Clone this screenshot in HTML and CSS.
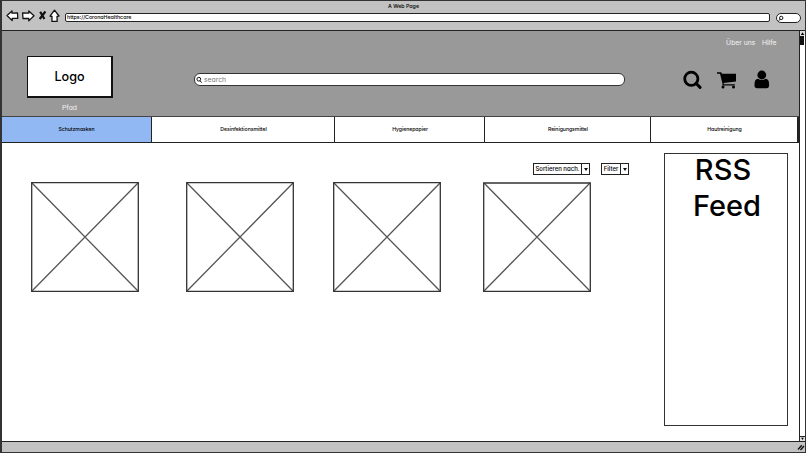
FILE: index.html
```html
<!DOCTYPE html>
<html lang="de">
<head>
<meta charset="utf-8">
<title>A Web Page</title>
<link rel="stylesheet" href="styles.css">
</head>
<body>
<div class="window">
  <div class="chrome">
    <div class="title"><span>A Web Page</span></div>
    <div class="toolbar">
      <svg class="controls" width="56" height="16" viewBox="0 0 56 16" fill="#fff" stroke="#111" stroke-width="1.3" stroke-linejoin="round">
        <path d="M1 7.500 6 3v2.200l5.500-.2.300 5.300H6.200v2.300z"/>
        <path d="M28 7.800 22.800 3v2.200L16.600 5l.4 5.500 5.800-.1v2.500z"/>
        <path d="M34.200 3.800l4.200 7.200m1-7.500-5.700 7.500" fill="none" stroke-width="2.200"/>
        <path d="M48.500 2.200 53 8l-2 .4.200 5h-5.300l.1-4.900-2-.4z"/>
      </svg>
      <div class="address">https://CoronaHealthcare</div>
      <div class="mini-search"><svg width="6" height="7" viewBox="0 0 6 7" fill="none" stroke="#111"><circle cx="3.200" cy="2.900" r="1.700"/><path d="M2 4.200.8 5.800"/></svg></div>
    </div>
  </div>
  <div class="viewport">
    <div class="page">
      <header class="header">
        <div class="brand">
          <div class="logo">Logo</div>
          <div class="path">Pfad</div>
        </div>
        <div class="search">
          <svg width="7" height="8" viewBox="0 0 7 8" fill="none" stroke="#111"><circle cx="2.800" cy="3.200" r="1.900"/><path d="M4 4.700 5.700 6.700"/></svg>
          <span>search</span>
        </div>
        <div class="account">
          <div class="links"><span>Über uns</span><span>Hilfe</span></div>
          <svg width="90" height="22" viewBox="0 0 90 22" fill="#000">
            <circle cx="9.300" cy="8.800" r="6.600" fill="none" stroke="#000" stroke-width="2.800"/>
            <path d="M14.200 13.500 18.100 17.400" stroke="#000" stroke-width="3" stroke-linecap="round"/>
            <path d="M35 2.200h4.200l.8 1.600H54v7.700L41.600 13l.3 1.200h10.900v1.400H40.300l.2-1.800L38 3.700h-3z"/>
            <circle cx="41" cy="17" r="1.500"/><circle cx="51.500" cy="17" r="1.500"/>
            <circle cx="79.800" cy="5" r="4.400"/>
            <path d="M76 8.800q3.800 2.600 7.600 0 3.500.4 3.500 5.500v1.200q0 2.700-2.700 2.700h-9.200q-2.700 0-2.700-2.700v-1.200q0-5.100 3.500-5.500z"/>
          </svg>
        </div>
      </header>
      <nav class="nav">
        <div class="tab active">Schutzmasken</div>
        <div class="tab">Desinfektionsmittel</div>
        <div class="tab">Hygienepapier</div>
        <div class="tab">Reinigungsmittel</div>
        <div class="tab">Hautreinigung</div>
      </nav>
      <div class="content">
        <main class="main">
          <div class="filters">
            <div class="select sort"><span>Sortieren nach.</span><i></i></div>
            <div class="select"><span>Filter</span><i></i></div>
          </div>
          <div class="products">
            <svg class="product" viewBox="0 0 108 110"><path class="cross" d="M1 1 107 109M107 1 1 109"/><path class="frame" d="M.7.700h106.600v108.600H.7z"/></svg>
            <svg class="product" viewBox="0 0 108 110"><path class="cross" d="M1 1 107 109M107 1 1 109"/><path class="frame" d="M.7.700h106.600v108.600H.7z"/></svg>
            <svg class="product" viewBox="0 0 108 110"><path class="cross" d="M1 1 107 109M107 1 1 109"/><path class="frame" d="M.7.700h106.600v108.600H.7z"/></svg>
            <svg class="product" viewBox="0 0 108 110"><path class="cross" d="M1 1 107 109M107 1 1 109"/><path class="frame" d="M.7 1h106.600v108.300H.7z"/></svg>
          </div>
        </main>
        <aside class="feed"><span>RSS</span><span>Feed</span></aside>
      </div>
    </div>
    <div class="scrollbar">
      <svg width="5" height="5" viewBox="0 0 5 5"><path d="M.8 4 2.500 1.300 4.200 4z"/></svg>
      <div class="thumb"></div>
      <svg class="down" width="5" height="5" viewBox="0 0 5 5"><path d="M.8 1 2.500 3.700 4.200 1z"/></svg>
    </div>
  </div>
  <div class="status">
    <svg width="8" height="7" viewBox="0 0 8 7" stroke="#111" stroke-width="1.400"><path d="M1 5.500 4.800 1.300M3.500 6 7 2"/></svg>
  </div>
</div>
</body>
</html>
```
FILE: styles.css
```css
* { box-sizing: border-box; }
body {
  margin: 0;
  font-family: Inter, "Liberation Sans", sans-serif;
  font-feature-settings: "cv11";
  color: #000;
}
svg { display: block; flex: none; }
.window {
  width: 806px;
  height: 453px;
  display: flex;
  flex-direction: column;
  border: 1px solid #333;
  border-left: 2px solid #333;
  background: #fff;
  overflow: hidden;
}
.chrome {
  height: 30px;
  background: #c2c2c2;
  border-bottom: 1px solid #222;
}
.title {
  height: 9px;
  line-height: 10px;
  font-size: 5.3px;
  font-weight: 500;
  text-align: center;
}
.toolbar {
  display: flex;
  align-items: flex-start;
  height: 18px;
}
.controls { margin: -2px 0 0 4px; }
.address {
  width: 705px;
  height: 9px;
  margin: 3px 6px 0 3px;
  padding-left: 1px;
  line-height: 7px;
  font-size: 5.3px;
  font-weight: 500;
  letter-spacing: -.03px;
  background: #fff;
  border: 1px solid #222;
  border-radius: 2px;
}
.mini-search {
  width: 25px;
  height: 10px;
  margin-top: 3px;
  padding: 1px;
  background: #fff;
  border: 1px solid #222;
  border-radius: 6px;
}
.viewport { display: flex; height: 410px; }
.page { width: 797px; }
.header {
  display: flex;
  height: 85px;
  background: #999;
}
.brand { width: 192px; padding: 25px 0 0 25px; }
.logo {
  width: 86px;
  height: 42px;
  line-height: 40px;
  text-align: center;
  font-size: 12.6px;
  font-weight: 500;
  background: #fff;
  border: 1px solid #111;
  border-right-width: 2px;
  border-bottom-width: 2px;
}
.path {
  width: 85px;
  margin-top: 5px;
  line-height: 10px;
  text-align: center;
  font-size: 6.8px;
  color: #f2f2f2;
}
.search {
  display: flex;
  align-items: center;
  width: 431px;
  height: 13px;
  margin-top: 42px;
  padding: 0 1px;
  gap: 1px;
  font-size: 6.8px;
  line-height: 10px;
  color: #777;
  background: #fff;
  border: 1px solid #333;
  border-radius: 6px;
}
.account { width: 152px; margin-left: 22px; padding-top: 7px; }
.links {
  display: flex;
  justify-content: flex-end;
  gap: 6.5px;
  height: 10px;
  line-height: 10px;
  font-size: 6.8px;
  color: #f5f5f5;
  padding-right: 22.5px;
}
.account svg { margin: 22px 0 0 35px; }
.nav {
  display: grid;
  grid-template-columns: 150px 183px 150px 166px 148px;
  height: 27px;
  border-top: 1px solid #444;
  border-bottom: 1px solid #222;
}
.tab {
  line-height: 25px;
  text-align: center;
  font-size: 5.2px;
  font-weight: 500;
  letter-spacing: -.06px;
  border-right: 1px solid #222;
}
.tab:nth-child(n+2) { padding-left: 1px; }
.tab:last-child { border-right-width: 2px; }
.active { background: #91b8f2; }
.content { display: flex; }
.main { width: 662px; padding-top: 20px; }
.filters {
  display: flex;
  justify-content: flex-end;
  gap: 11px;
  padding-right: 35px;
}
.select {
  display: flex;
  width: 28px;
  height: 12px;
  border: 1px solid #222;
  font-size: 6px;
  font-weight: 500;
  line-height: 10px;
  white-space: nowrap;
}
.sort { width: 57px; }
.select span { flex: 1; text-align: center; }
.select i {
  display: flex;
  align-items: center;
  justify-content: center;
  width: 8px;
  border-left: 1px solid #222;
}
.select i::before {
  content: "";
  border: 2px solid transparent;
  border-top: 3px solid #111;
  border-bottom: 0;
}
.products {
  display: grid;
  grid-template-columns: 155px 147px 150px 108px;
  padding: 7px 0 0 29px;
}
.product { width: 108px; height: 110px; }
.product path { fill: none; stroke: #333; stroke-width: 1.3; }
.product .cross { stroke: #555; }
.feed {
  display: flex;
  flex-direction: column;
  width: 124px;
  height: 273px;
  margin-top: 10px;
  text-align: center;
  font-size: 29px;
  font-weight: 500;
  line-height: 36px;
  border: 1px solid #333;
}
.feed span:first-child { margin-top: -2px; padding-right: 6px; }
.feed span:last-child { padding-left: 2px; }
.scrollbar {
  display: flex;
  flex-direction: column;
  width: 6px;
  border-left: 1px solid #222;
}
.scrollbar svg { background: #ddd; }
.thumb { width: 4px; height: 9px; background: #111; }
.down { margin-top: auto; border-top: 1px solid #222; }
.status {
  display: flex;
  justify-content: flex-end;
  align-items: center;
  height: 11px;
  background: #c2c2c2;
  border-top: 1px solid #222;
}
```
